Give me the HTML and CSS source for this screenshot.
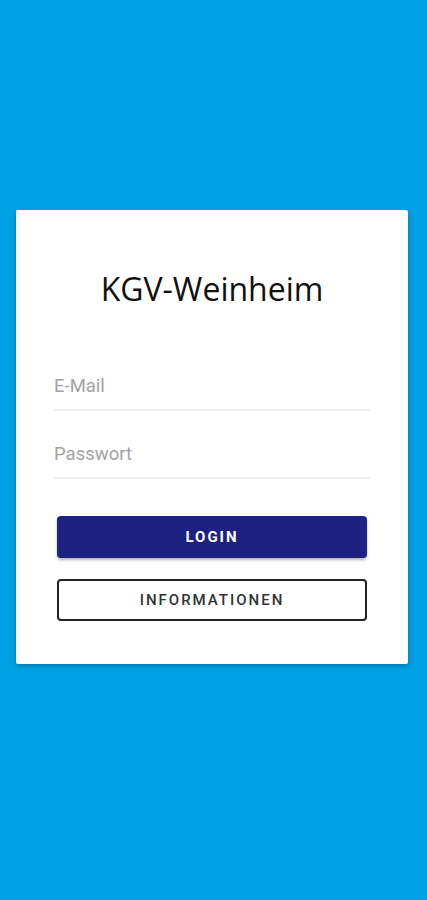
FILE: index.html
```html
<!DOCTYPE html>
<html lang="de">
<head>
  <meta charset="UTF-8" />
  <meta name="viewport" content="width=device-width, initial-scale=1.0" />
  <title>KGV-Weinheim</title>
  <link rel="stylesheet" href="styles.css">
</head>
<body>
  <div class="screen">
    <div class="card">
      <h1 class="title">KGV-Weinheim</h1>

      <div class="field">
        <input type="email" placeholder="E-Mail" />
      </div>
      <div class="field">
        <input type="password" placeholder="Passwort" />
      </div>

      <div class="actions">
        <button class="btn btn-login">LOGIN</button>
        <button class="btn btn-info">INFORMATIONEN</button>
      </div>
    </div>
  </div>
</body>
</html>
```

FILE: styles.css
```css
body {
  margin: 0;
  padding: 0;
  background-color: #00a0e4;
  font-family: Roboto, "Noto Sans", sans-serif;
}

.screen {
  width: 427px;
  height: 900px;
  padding-top: 210px;
  box-sizing: border-box;
}

.card {
  margin: 0 19px 0 16px;
  height: 454px;
  box-sizing: border-box;
  background: #fff;
  border-radius: 2px;
  box-shadow: 0 2px 4px rgba(0, 0, 0, 0.25);
  padding: 57px 38px 0 38px;
}

.title {
  margin: 0 0 52px 0;
  font-family: "Open Sans", "Noto Sans", sans-serif;
  font-weight: 400;
  font-size: 32px;
  line-height: 44px;
  text-align: center;
  color: #111;
}

.field {
  border-bottom: 2px solid #eeeeee;
  margin-bottom: 20px;
}

.field input {
  display: block;
  width: 100%;
  border: none;
  outline: none;
  padding: 0;
  height: 46px;
  font-family: Roboto, sans-serif;
  font-size: 18.5px;
  color: #333;
  background: transparent;
}

.field input::placeholder {
  color: #a3a3a3;
}

.actions {
  display: flex;
  flex-direction: column;
  gap: 21px;
  padding: 17px 3px 0 3px;
}

.btn {
  height: 42px;
  border-radius: 4px;
  font-family: Roboto, sans-serif;
  font-size: 15px;
  font-weight: 500;
  letter-spacing: 2px;
  cursor: pointer;
}

.btn-login {
  background: #1d2182;
  color: #fff;
  border: none;
  font-weight: 700;
  box-shadow: 0 2px 3px rgba(0, 0, 0, 0.3);
}

.btn-info {
  background: #fff;
  color: #333;
  border: 2px solid #222;
}
```
